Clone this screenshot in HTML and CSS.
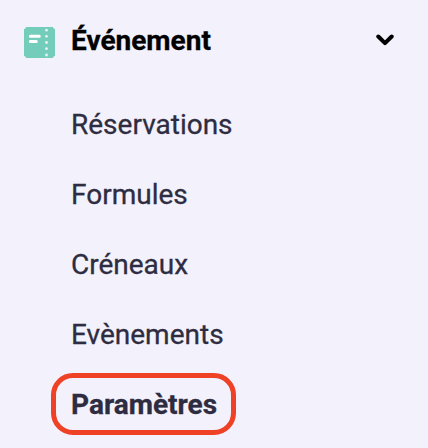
FILE: index.html
```html
<!DOCTYPE html>
<html lang="fr">
<head>
    <meta charset="UTF-8">
    <meta name="viewport" content="width=device-width, initial-scale=1.0">
    <title>Événement</title>
    <link rel="stylesheet" href="styles.css">
</head>
<body>

    <nav class="sidebar">
        <div class="menu-header">
            <svg class="menu-icon" viewBox="0 0 31 31">
                <path fill="#74cdbb" d="M2 0h27q0 2 2 2v27q-2 0-2 2H2q0-2-2-2V2q2 0 2-2z"/>
                <path stroke="#fff" stroke-width="3" stroke-linecap="round" d="M6.300 9.200h9M6.300 14.500h6"/>
                <g fill="#e3f3f4">
                    <circle cx="22.500" cy="3.200" r="1.400"/>
                    <circle cx="22.500" cy="9.300" r="1.400"/>
                    <circle cx="22.500" cy="15.500" r="1.400"/>
                    <circle cx="22.500" cy="21.700" r="1.400"/>
                    <circle cx="22.500" cy="28" r="1.400"/>
                </g>
            </svg>
            <span class="menu-title">Événement</span>
            <svg class="chevron" viewBox="0 0 18 12">
                <path fill="none" stroke="#000" stroke-width="4" stroke-linecap="round" stroke-linejoin="round" d="M2.300 2.500L9 9.200l6.700-6.700"/>
            </svg>
        </div>
        <ul class="submenu">
            <li><a href="#">Réservations</a></li>
            <li><a href="#">Formules</a></li>
            <li><a href="#">Créneaux</a></li>
            <li><a href="#">Evènements</a></li>
            <li><a href="#" class="active">Paramètres</a></li>
        </ul>
    </nav>

</body>
</html>
```

FILE: styles.css
```css
* { box-sizing: border-box; margin: 0; padding: 0; }
body {
    font-family: Roboto, "Liberation Sans", sans-serif; font-size: 28px;
    background-color: #f3f1fb; color: #2e2c41; overflow: hidden;
    -webkit-text-stroke: 0.3px;
}
.sidebar { padding-top: 5px; }
.menu-header { display: flex; align-items: center; height: 70px; padding: 0 34px 0 24px; }
.menu-icon { width: 31px; height: 31px; margin-top: 5px; }
.menu-title { flex-grow: 1; margin-left: 16px; color: #000; font-weight: 700; }
.chevron { width: 18px; height: 12px; }
.submenu { list-style: none; margin-top: 14px; padding-left: 51px; }
.submenu li { display: flex; align-items: center; height: 70px; }
.submenu a { padding-left: 20px; color: inherit; text-decoration: none; }
.submenu .active {
    width: 185px; height: 62px; padding-left: 15px; line-height: 54px;
    border: 5px solid #ee4126; border-radius: 22px; font-weight: 700;
}
```
